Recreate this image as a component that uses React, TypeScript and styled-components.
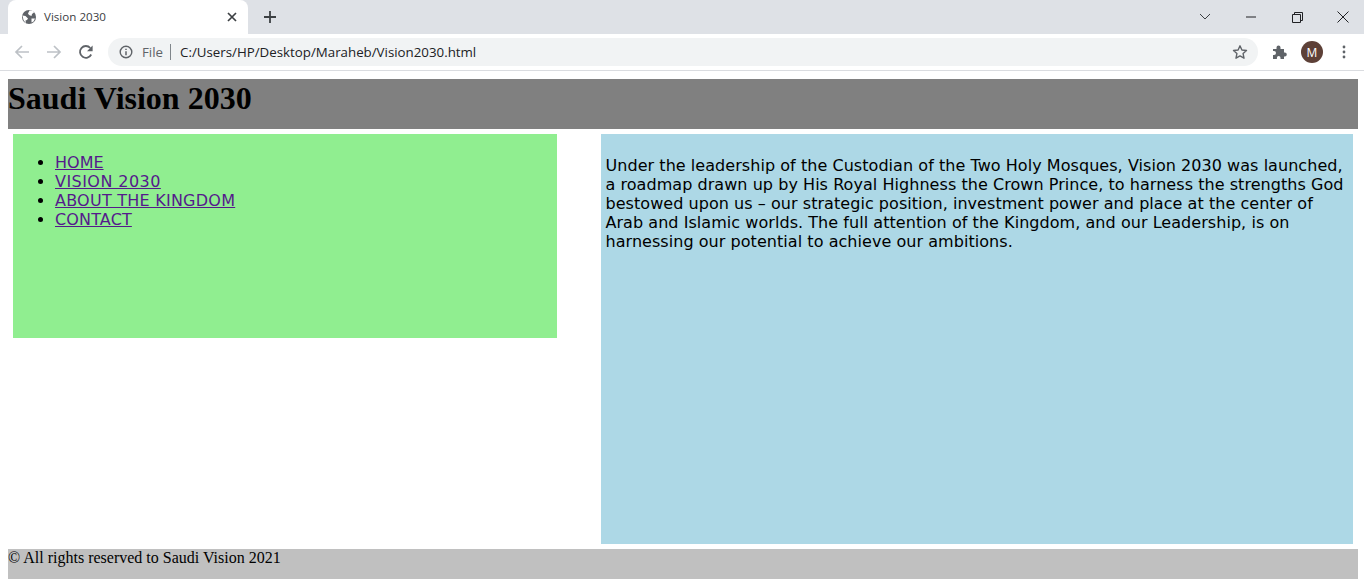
import React from "react";
import styled, { createGlobalStyle } from "styled-components";

const Global = createGlobalStyle`
  html, body { margin: 0; padding: 0; background: #fff; }
  body { font-family: "Liberation Serif", serif; overflow: hidden; }
`;

const Window = styled.div`
  width: 1364px;
  height: 588px;
  display: flex;
  flex-direction: column;
  background: #fff;
  overflow: hidden;
`;

const TabStrip = styled.div`
  height: 34px;
  background: #dee1e6;
  display: flex;
  align-items: flex-end;
  padding-left: 8px;
`;

const Tab = styled.div`
  width: 240px;
  height: 34px;
  box-sizing: border-box;
  background: #fff;
  border-radius: 8px 8px 0 0;
  display: flex;
  align-items: center;
  padding: 0 8px 0 13px;
  gap: 7px;
`;

const TabTitle = styled.span`
  flex: 1;
  font: 11.6px "Open Sans", sans-serif;
  color: #3c4043;
  white-space: nowrap;
  margin-top: -1px;
`;

const NewTab = styled.div`
  width: 24px;
  height: 24px;
  margin: 0 auto 5px 10px;
  display: flex;
  align-items: center;
  justify-content: center;
`;

const WindowControls = styled.div`
  display: flex;
  align-items: center;
  align-self: flex-start;
  height: 34px;
  margin-right: -2px;
`;

const WindowButton = styled.div<{ $w: number }>`
  width: ${(p) => p.$w}px;
  height: 30px;
  display: flex;
  align-items: center;
  justify-content: center;
`;

const Toolbar = styled.div`
  height: 36px;
  box-sizing: border-box;
  display: flex;
  align-items: center;
  padding-left: 6px;
`;

const NavIcon = styled.div`
  width: 32px;
  height: 28px;
  display: flex;
  align-items: center;
  justify-content: center;
`;

const Omnibox = styled.div`
  width: 1150px;
  height: 28px;
  margin-left: 6px;
  background: #f1f3f4;
  border-radius: 14px;
  display: flex;
  align-items: center;
  padding-left: 11px;
  box-sizing: border-box;
`;

const FileLabel = styled.span`
  font: 13.3px "Open Sans", sans-serif;
  color: #5f6368;
  margin-left: 9px;
  padding-right: 7px;
  border-right: 1px solid #80868b;
  line-height: 16px;
`;

const Url = styled.span`
  font: 13.3px "Open Sans", sans-serif;
  color: #202124;
  margin-left: 9px;
`;

const StarSlot = styled.div`
  margin-left: auto;
  margin-right: 10px;
  display: flex;
`;

const ToolbarRight = styled.div`
  display: flex;
  align-items: center;
  margin-left: 14px;
  gap: 13px;
`;

const Avatar = styled.div`
  width: 22px;
  height: 22px;
  border-radius: 50%;
  background: #5d4037;
  color: #fff;
  font: 12px "Open Sans", sans-serif;
  display: flex;
  align-items: center;
  justify-content: center;
`;

const Divider = styled.div`
  height: 1px;
  background: #dadce0;
`;

const Page = styled.div`
  padding: 8px 6px 0 8px;
  color: #000;
`;

const Banner = styled.header`
  height: 50px;
  background: #808080;
  font: bold 32px/39px "Liberation Serif", serif;
`;

const Title = styled.h1`
  margin: 0;
  font: inherit;
`;

const Columns = styled.div`
  display: grid;
  grid-template-columns: 544px 752px;
  column-gap: 44px;
  padding: 5px 5px;
  align-items: start;
`;

const Sidebar = styled.nav`
  height: 204px;
  background: #90ee90;
  padding: 19px 0 0 2px;
  box-sizing: border-box;
`;

const Menu = styled.ul`
  margin: 0;
  padding: 0 0 0 40px;
  font: 16px/19px "DejaVu Sans", Verdana, sans-serif;
`;

const MenuLink = styled.a<{ $track: number }>`
  color: #551a8b;
  text-decoration: underline;
  letter-spacing: ${(p) => p.$track}px;
`;

const Article = styled.main`
  height: 410px;
  background: #add8e6;
  padding: 22px 4px 0 4.5px;
  box-sizing: border-box;
  font: 16px/19px "DejaVu Sans", Verdana, sans-serif;
  letter-spacing: 0.05px;
`;

const Paragraph = styled.p`
  margin: 0;
`;

const Footer = styled.footer`
  height: 30px;
  background: #c0c0c0;
  font: 16px/18px "Liberation Serif", serif;
`;

const Globe = () => (
  <svg width="16" height="16" viewBox="0 0 16 16">
    <circle cx="8" cy="8" r="7" fill="#5f6368" />
    <path d="M1.5 6.5l3 .5 2.5 2.500-1 1.500-1.500.5.5 3L2.500 11zM8.500 1.500H12l1 2-2 1.500-.5 2-2.500-1-1-1.500zM10.500 9.500h3.500l-1.500 3-2 1z" fill="#fff" />
  </svg>
);

const CloseX = () => (
  <svg width="16" height="16" viewBox="0 0 16 16">
    <path d="M4 4l8 8M12 4l-8 8" stroke="#3c4043" strokeWidth="1.7" fill="none" />
  </svg>
);

const Plus = () => (
  <svg width="14" height="14" viewBox="0 0 14 14">
    <path d="M7 1v12M1 7h12" stroke="#3c4043" strokeWidth="1.8" fill="none" />
  </svg>
);

const Arrow = ({ flip, color }: { flip?: boolean; color: string }) => (
  <svg width="16" height="16" viewBox="0 0 16 16" style={flip ? { transform: "scaleX(-1)" } : undefined}>
    <path d="M15 8H2M8 2L2 8l6 6" stroke={color} strokeWidth="1.7" fill="none" />
  </svg>
);

const Reload = () => (
  <svg width="16" height="16" viewBox="0 0 16 16">
    <path d="M13.2 10.5A5.9 5.9 0 1 1 12.3 4" stroke="#5f6368" strokeWidth="1.8" fill="none" />
    <path d="M14.6 1.6v5.6H9z" fill="#5f6368" />
  </svg>
);

const Info = () => (
  <svg width="14" height="14" viewBox="0 0 14 14">
    <circle cx="7" cy="7" r="5.8" stroke="#5f6368" strokeWidth="1.4" fill="none" />
    <path d="M7 6.2v4M7 3.7v1.4" stroke="#5f6368" strokeWidth="1.5" fill="none" />
  </svg>
);

const Star = () => (
  <svg width="16" height="16" viewBox="0 0 16 16">
    <path d="M8 1.8l1.9 4.2 4.6.5-3.400 3.100.9 4.600L8 11.900l-4 2.300.9-4.600L1.500 6.500l4.600-.5z" stroke="#5f6368" strokeWidth="1.4" fill="none" strokeLinejoin="round" />
  </svg>
);

const Puzzle = () => (
  <svg width="16" height="16" viewBox="0 0 16 16">
    <path d="M1 5h3.500V3.500a2 2 0 0 1 4 0V5H12v3.500h.8a2 2 0 0 1 0 4H12V15H8.500v-1.200a1.800 1.800 0 0 0-3.600 0V15H1v-4h1a2 2 0 0 0 0-4H1z" fill="#5f6368" />
  </svg>
);

const Dots = () => (
  <svg width="16" height="16" viewBox="0 0 16 16">
    <circle cx="8" cy="3" r="1.4" fill="#5f6368" />
    <circle cx="8" cy="8" r="1.4" fill="#5f6368" />
    <circle cx="8" cy="13" r="1.4" fill="#5f6368" />
  </svg>
);

const Chevron = () => (
  <svg width="12" height="8" viewBox="0 0 12 8">
    <path d="M1 1l5 5 5-5" stroke="#3c4043" strokeWidth="1" fill="none" />
  </svg>
);

const Minimize = () => (
  <svg width="10" height="2" viewBox="0 0 10 2">
    <path d="M0 1h10" stroke="#202124" strokeWidth="1" fill="none" />
  </svg>
);

const Restore = () => (
  <svg width="11" height="11" viewBox="0 0 11 11">
    <path d="M.5 2.500h8v8h-8zM2.500 2.500v-2h8v8h-2" stroke="#202124" strokeWidth="1" fill="none" />
  </svg>
);

const CloseWin = () => (
  <svg width="12" height="12" viewBox="0 0 12 12">
    <path d="M.5.5l11 11M11.500.5l-11 11" stroke="#202124" strokeWidth="1" fill="none" />
  </svg>
);

const links = [
  { label: "HOME", track: 0 },
  { label: "VISION 2030", track: 0.45 },
  { label: "ABOUT THE KINGDOM", track: 0.24 },
  { label: "CONTACT", track: 0.14 },
];

export default function App() {
  return (
    <Window>
      <Global />
      <TabStrip>
        <Tab>
          <Globe />
          <TabTitle>Vision 2030</TabTitle>
          <CloseX />
        </Tab>
        <NewTab>
          <Plus />
        </NewTab>
        <WindowControls>
          <WindowButton $w={46}><Chevron /></WindowButton>
          <WindowButton $w={46}><Minimize /></WindowButton>
          <WindowButton $w={46}><Restore /></WindowButton>
          <WindowButton $w={46}><CloseWin /></WindowButton>
        </WindowControls>
      </TabStrip>
      <Toolbar>
        <NavIcon><Arrow color="#bdc1c6" /></NavIcon>
        <NavIcon><Arrow flip color="#bdc1c6" /></NavIcon>
        <NavIcon><Reload /></NavIcon>
        <Omnibox>
          <Info />
          <FileLabel>File</FileLabel>
          <Url>C:/Users/HP/Desktop/Maraheb/Vision2030.html</Url>
          <StarSlot><Star /></StarSlot>
        </Omnibox>
        <ToolbarRight>
          <Puzzle />
          <Avatar>M</Avatar>
          <Dots />
        </ToolbarRight>
      </Toolbar>
      <Divider />
      <Page>
        <Banner>
          <Title>Saudi Vision 2030</Title>
        </Banner>
        <Columns>
          <Sidebar>
            <Menu>
              {links.map((l) => (
                <li key={l.label}>
                  <MenuLink href="#" $track={l.track}>{l.label}</MenuLink>
                </li>
              ))}
            </Menu>
          </Sidebar>
          <Article>
            <Paragraph>
              Under the leadership of the Custodian of the Two Holy Mosques, Vision 2030 was launched, a roadmap drawn up by His Royal Highness the Crown Prince, to harness the strengths God bestowed upon us – our strategic position, investment power and place at the center of Arab and Islamic worlds. The full attention of the Kingdom, and our Leadership, is on harnessing our potential to achieve our ambitions.
            </Paragraph>
          </Article>
        </Columns>
        <Footer>© All rights reserved to Saudi Vision 2021</Footer>
      </Page>
    </Window>
  );
}
